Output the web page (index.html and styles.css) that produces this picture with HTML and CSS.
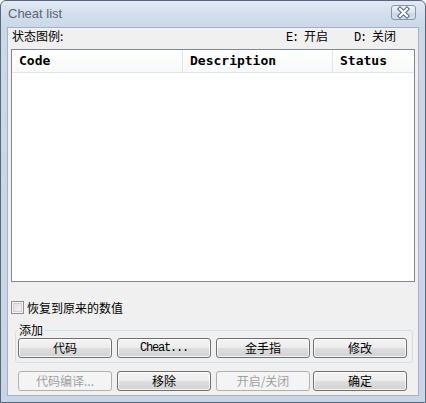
FILE: index.html
```html
<!DOCTYPE html>
<html lang="zh">
<head>
<meta charset="utf-8">
<title>Cheat list</title>
<link rel="stylesheet" href="styles.css">
</head>
<body>
<div class="window">
  <div class="titlebar">
    <span class="title">Cheat list</span>
    <div class="close">
      <svg width="25" height="15" viewBox="0 0 25 15">
        <path d="M9 4 L16 11 M16 4 L9 11" stroke="#5f6f82" stroke-width="4.4" stroke-linecap="square" fill="none"/>
        <path d="M9 4 L16 11 M16 4 L9 11" stroke="#ffffff" stroke-width="2.2" stroke-linecap="square" fill="none"/>
      </svg>
    </div>
  </div>
  <div class="client">
    <div class="legend">
      <span class="legend-label">状态图例:</span>
      <span class="legend-state"><span class="mono">E: </span>开启</span>
      <span class="legend-state"><span class="mono">D: </span>关闭</span>
    </div>
    <div class="list">
      <div class="list-header">
        <div class="col col-code">Code</div>
        <div class="col col-desc">Description</div>
        <div class="col col-status">Status</div>
      </div>
    </div>
    <label class="restore">
      <span class="checkbox"></span>
      <span class="restore-text">恢复到原来的数值</span>
    </label>
    <fieldset class="group">
      <legend class="group-label">添加</legend>
      <div class="btn-row">
        <button class="btn">代码</button>
        <button class="btn mono">Cheat...</button>
        <button class="btn">金手指</button>
        <button class="btn tight">修改</button>
      </div>
    </fieldset>
    <div class="btn-row row2">
      <button class="btn" disabled>代码编译...</button>
      <button class="btn">移除</button>
      <button class="btn" disabled>开启/关闭</button>
      <button class="btn tight">确定</button>
    </div>
  </div>
</div>
</body>
</html>
```
FILE: styles.css
```css
html, body {
  margin: 0;
  padding: 0;
  background: #ffffff;
}

body {
  font-family: "Noto Sans CJK SC", "Noto Sans", sans-serif;
  font-size: 12px;
  color: #000;
}

.window {
  width: 426px;
  height: 403px;
  box-sizing: border-box;
  border: 1px solid #59687a;
  border-radius: 6px 6px 0 0;
  background: linear-gradient(#e2eaf4 0px, #d2deec 14px, #cad8e8 27px, #c7d5e6 100%);
  padding: 0 6px 6px 6px;
  display: flex;
  flex-direction: column;
}

.titlebar {
  height: 26px;
  display: flex;
  align-items: flex-start;
}

.title {
  font-family: "Liberation Sans", "Noto Sans", sans-serif;
  font-size: 13px;
  line-height: 16px;
  color: #5c6773;
  padding: 5px 0 0 1px;
}

.close {
  margin: 4px 3px 0 auto;
  width: 25px;
  height: 15px;
  box-sizing: border-box;
  border: 1px solid #8797aa;
  border-radius: 3px;
  background: linear-gradient(#eef3f8, #dbe4ee 50%, #cbd7e4 51%, #d4dfeb);
  display: flex;
  align-items: center;
  justify-content: center;
}

.close svg {
  display: block;
  margin: -1px;
}

.client {
  flex: 1;
  border: 1px solid #a3b2c4;
  background: #f0f0f0;
  display: flex;
  flex-direction: column;
}

.mono {
  font-family: "Liberation Mono", "DejaVu Sans Mono", monospace;
  letter-spacing: -1.2px;
}

.legend {
  height: 21px;
  line-height: 16px;
  padding-left: 4px;
  display: grid;
  grid-template-columns: 274px 68px auto;
}

.legend-state .mono {
  font-size: 12px;
  white-space: pre;
}

.list {
  margin: 0 3px;
  height: 233px;
  box-sizing: border-box;
  border: 1px solid #828790;
  background: #ffffff;
}

.list-header {
  display: flex;
  height: 23px;
  box-sizing: border-box;
  border-bottom: 1px solid #e1e3e6;
  background: linear-gradient(#ffffff, #f8f9fa);
}

.col {
  font-family: "DejaVu Sans Mono", "Liberation Mono", monospace;
  font-weight: bold;
  font-size: 13px;
  line-height: 22px;
  padding-left: 7px;
  box-sizing: border-box;
  border-right: 1px solid #e3e5e8;
}

.col-code {
  width: 171px;
}

.col-desc {
  width: 150px;
}

.col-status {
  flex: 1;
  border-right: none;
}

.restore {
  margin: 19px 0 0 3px;
  height: 13px;
  display: flex;
  align-items: center;
}

.checkbox {
  width: 13px;
  height: 13px;
  box-sizing: border-box;
  border: 1px solid #8e8f8f;
  background: linear-gradient(135deg, #dcdcdc, #f6f6f6);
  box-shadow: inset 0 0 0 1px #f4f4f4, inset 0 0 0 2px #d0d0d0;
}

.restore-text {
  margin-left: 3px;
  line-height: 14px;
}

.group {
  margin: 8px 5px 0 7px;
  padding: 0 0 4px 2px;
  border: 1px solid #d5dfe5;
  border-radius: 3px;
  min-width: 0;
}

.group-label {
  padding: 0 1px;
  line-height: 16px;
  font-size: 12px;
}

.btn-row {
  display: flex;
}

.row2 {
  margin-top: 8px;
  padding-left: 10px;
}

.btn {
  width: 94px;
  height: 20px;
  box-sizing: border-box;
  margin: 0;
  padding: 0;
  border: 1px solid #707070;
  border-radius: 3px;
  background: linear-gradient(#f4f4f4 0%, #ececec 48%, #dedede 52%, #d2d2d2 100%);
  box-shadow: inset 0 0 0 1px rgba(255, 255, 255, 0.75);
  font-family: "Noto Sans CJK SC", "Noto Sans", sans-serif;
  font-size: 12px;
  line-height: 18px;
  color: #000;
  text-align: center;
}

.btn.mono {
  font-family: "Liberation Mono", "DejaVu Sans Mono", monospace;
  font-size: 12px;
}

.btn + .btn {
  margin-left: 5px;
}

.btn + .btn.tight {
  margin-left: 3px;
}

.btn:disabled {
  border-color: #adb2b5;
  background: #f4f4f4;
  box-shadow: none;
  color: #a0a0a0;
}
```
